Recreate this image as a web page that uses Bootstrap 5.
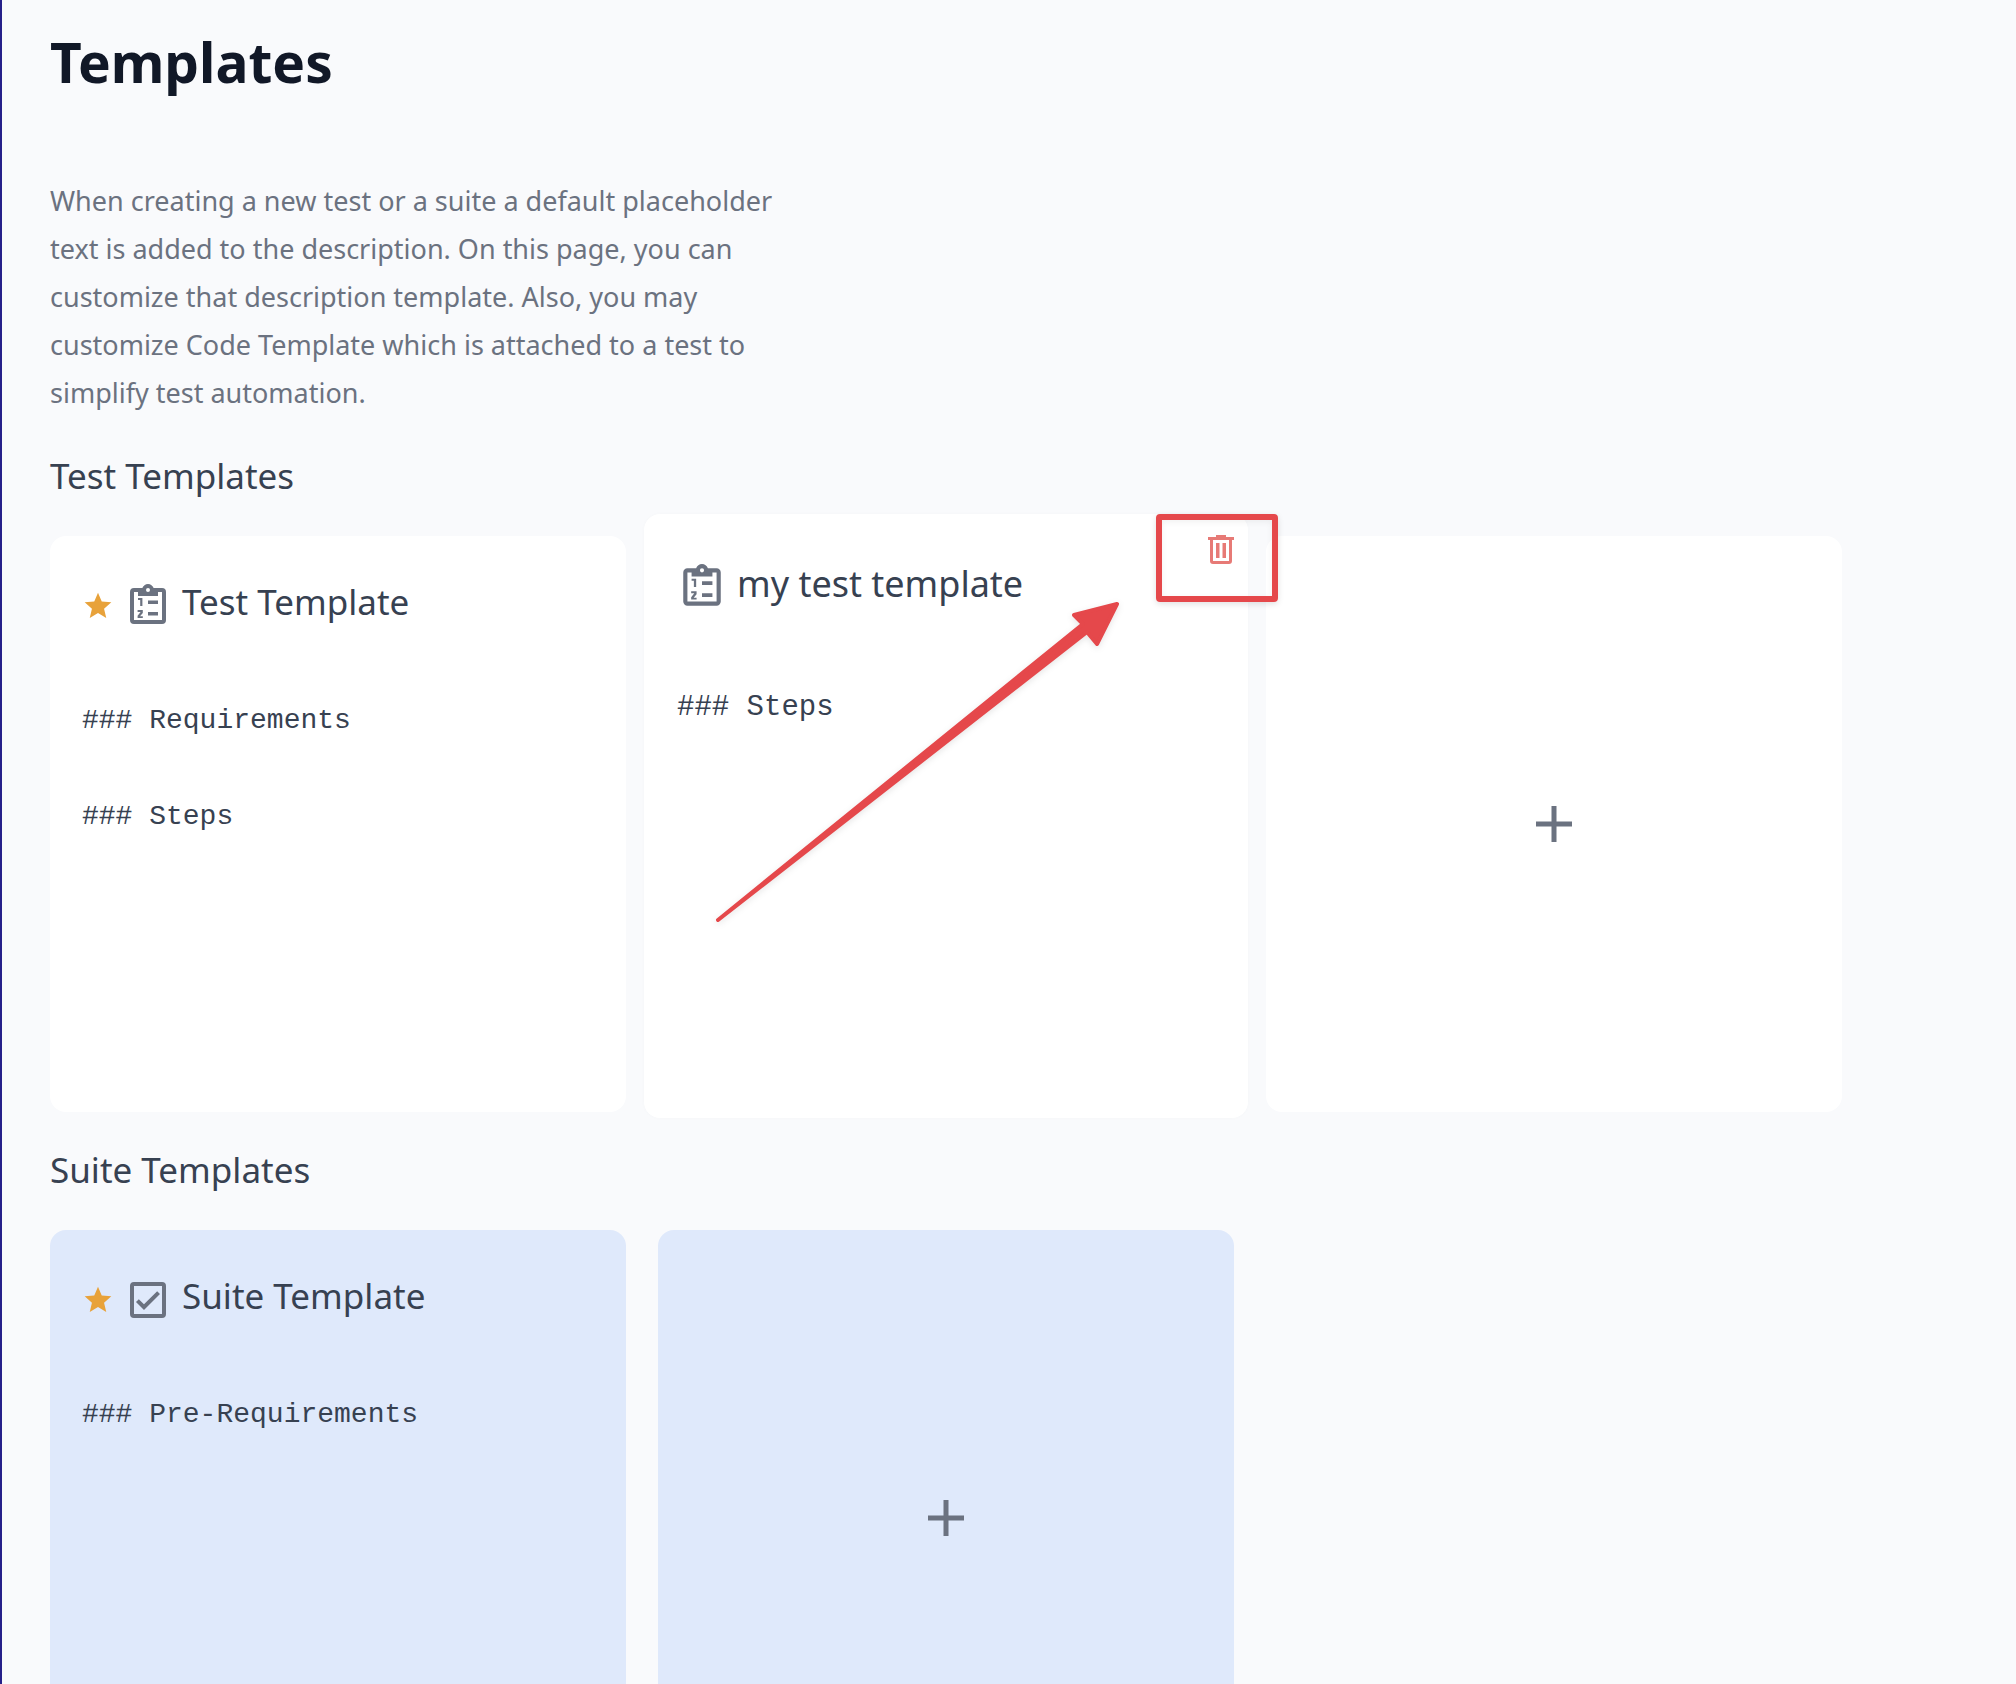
<!DOCTYPE html>
<html lang="en">
<head>
<meta charset="utf-8">
<meta name="viewport" content="width=device-width, initial-scale=1">
<title>Templates</title>
<link href="https://cdn.jsdelivr.net/npm/bootstrap@5.3.0/dist/css/bootstrap.min.css" rel="stylesheet">
<style>
body { background: #f9fafc; color: #374151; font-family: "Noto Sans", sans-serif; font-size: 27px; line-height: 48px; }
.page-shell { border-left: 2px solid #26208a; padding: 24px 48px 0; }
.page-title { font-size: 55px; line-height: 76px; color: #111827; margin-bottom: 77px; }
.page-intro { max-width: 740px; color: #6b7280; margin-bottom: 35px; }
.section-title { font-size: 35px; line-height: 48px; margin-bottom: 36px; }
.tile-row { gap: 32px; margin-bottom: 34px; }
.tile { flex: 0 0 576px; height: 576px; background: #fff; border: 0; border-radius: 16px; padding: 40px 32px; color: #6b7280; }
.tile-suite { background: #dfe9fb; }
.tile-raised { flex-basis: 604px; height: 604px; margin: -22px -14px -6px; padding: 44px 33px; box-shadow: 0 0 4px rgba(17, 24, 39, .02); }
.tile-head { gap: 10px; height: 60px; margin-bottom: 61px; }
.tile-raised .tile-head { height: 58px; margin-bottom: 67px; }
.tile-name { font-size: 35px; line-height: 51px; margin: 0; color: #374151; }
.tile-raised .tile-name { font-size: 36px; }
.tile-code { font: 28px/48px "Liberation Mono", monospace; margin: 0; color: #374151; }
.tile-raised .tile-code { font-size: 29px; line-height: 50px; }
.ico { fill: currentColor; flex: none; }
.ico-star { color: #e8a23a; }
.trash-btn { top: 21px; right: 14px; color: #e77a76; line-height: 1; }
.callout-box { left: 512px; top: 0; width: 122px; height: 88px; border: 6px solid #e5484b; border-radius: 4px; box-shadow: 0 2px 6px rgba(0, 0, 0, .12), inset 0 2px 6px rgba(0, 0, 0, .06); pointer-events: none; }
.callout-arrow { left: 64px; top: 80px; overflow: visible; pointer-events: none; filter: drop-shadow(0 2px 3px rgba(0, 0, 0, .1)); }
</style>
</head>
<body>
<svg class="d-none" aria-hidden="true">
  <symbol id="i-star" viewBox="0 0 24 24"><path d="M12 17.27 18.18 21l-1.64-7.03L22 9.24l-7.19-.62L12 2 9.19 8.62 2 9.24l5.45 4.73L5.82 21z"/></symbol>
  <symbol id="i-test" viewBox="0 0 24 24"><path fill-rule="evenodd" d="M19 3h-4.18C14.4 1.84 13.3 1 12 1s-2.4.84-2.82 2H5a2 2 0 0 0-2 2v14a2 2 0 0 0 2 2h14a2 2 0 0 0 2-2V5a2 2 0 0 0-2-2m-7 0a1 1 0 1 1 0 2 1 1 0 0 1 0-2M7 7h10V5h2v14H5V5h2z"/><path d="M12 9.2h5V11h-5zM12 15h5v1.8h-5zM7 8h2.2v4H8.1V9H7zM6.8 14h2.6v1.5L8 17.1h1.4V18H6.8v-1.1l1.5-1.9H6.8z"/></symbol>
  <symbol id="i-suite" viewBox="0 0 24 24"><path fill-rule="evenodd" d="M19 3H5a2 2 0 0 0-2 2v14a2 2 0 0 0 2 2h14a2 2 0 0 0 2-2V5a2 2 0 0 0-2-2m0 2v14H5V5z"/><path d="m17.99 9-1.41-1.42-6.59 6.59-2.58-2.57-1.42 1.41 4 3.99z"/></symbol>
  <symbol id="i-plus" viewBox="0 0 36 36"><path d="M15.5 0h5v15.5H36v5H20.5V36h-5V20.5H0v-5h15.5z"/></symbol>
  <symbol id="i-trash" viewBox="0 0 26 29"><path fill-rule="evenodd" d="M8 0h10v2h8v3h-2v21a3 3 0 0 1-3 3H5a3 3 0 0 1-3-3V5H0V2h8zM5 5v21h16V5z"/><path d="M8 8h3.5v15H8zM14.5 8H18v15h-3.5z"/></symbol>
</svg>
<main class="page-shell vh-100 overflow-hidden">
  <h1 class="page-title fw-bold">Templates</h1>
  <p class="page-intro">When creating a new test or a suite a default placeholder text is added to the description. On this page, you can customize that description template. Also, you may customize Code Template which is attached to a test to simplify test automation.</p>

  <h2 class="section-title fw-normal">Test Templates</h2>
  <div class="tile-row d-flex">
    <article class="tile">
      <div class="tile-head d-flex align-items-center">
        <svg class="ico ico-star" width="32" height="32" aria-hidden="true"><use href="#i-star"/></svg>
        <svg class="ico" width="48" height="48" aria-hidden="true"><use href="#i-test"/></svg>
        <h3 class="tile-name fw-normal align-self-start">Test Template</h3>
      </div>
      <pre class="tile-code">### Requirements

### Steps</pre>
    </article>
    <article class="tile tile-raised position-relative z-1">
      <div class="tile-head d-flex align-items-center">
        <svg class="ico" width="50" height="50" aria-hidden="true"><use href="#i-test"/></svg>
        <h3 class="tile-name fw-normal align-self-start">my test template</h3>
      </div>
      <pre class="tile-code">### Steps</pre>
      <button type="button" class="trash-btn btn border-0 p-0 d-flex position-absolute" aria-label="Delete template"><svg class="ico" width="26" height="29" aria-hidden="true"><use href="#i-trash"/></svg></button>
      <div class="callout-box position-absolute"></div>
      <svg class="callout-arrow position-absolute" width="420" height="330" viewBox="0 0 420 330" aria-hidden="true"><path fill="#e5484b" stroke="#e5484b" stroke-width="4" stroke-linejoin="round" d="M409 10 366 21 375 30 10 326 379 38 389 50z"/></svg>
    </article>
    <button type="button" class="tile d-flex align-items-center justify-content-center" aria-label="Add test template"><svg class="ico" width="36" height="36" aria-hidden="true"><use href="#i-plus"/></svg></button>
  </div>

  <h2 class="section-title fw-normal">Suite Templates</h2>
  <div class="tile-row d-flex">
    <article class="tile tile-suite">
      <div class="tile-head d-flex align-items-center">
        <svg class="ico ico-star" width="32" height="32" aria-hidden="true"><use href="#i-star"/></svg>
        <svg class="ico" width="48" height="48" aria-hidden="true"><use href="#i-suite"/></svg>
        <h3 class="tile-name fw-normal align-self-start">Suite Template</h3>
      </div>
      <pre class="tile-code">### Pre-Requirements</pre>
    </article>
    <button type="button" class="tile tile-suite d-flex align-items-center justify-content-center" aria-label="Add suite template"><svg class="ico" width="36" height="36" aria-hidden="true"><use href="#i-plus"/></svg></button>
  </div>
</main>
<script src="https://cdn.jsdelivr.net/npm/bootstrap@5.3.0/dist/js/bootstrap.bundle.min.js"></script>
</body>
</html>
